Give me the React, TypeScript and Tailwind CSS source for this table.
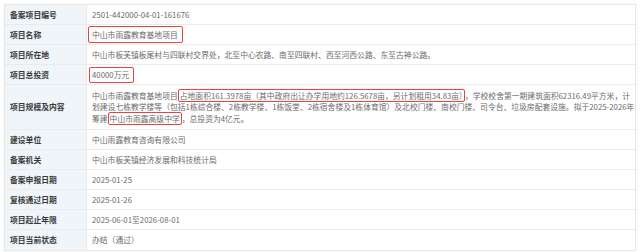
const rows: { label: string; value: React.ReactNode; tall?: boolean }[] = [
  { label: "备案项目编号", value: "2501-442000-04-01-161676" },
  {
    label: "项目名称",
    value: (
      <span className="-ml-[4px] inline-block rounded-[2px] border-[1.5px] border-[#e8433d] px-[3px] pr-[4px] leading-[15px]">
        中山市雨露教育基地项目
      </span>
    ),
  },
  {
    label: "项目所在地",
    value: "中山市板芙镇板尾村与四联村交界处，北至中心农路、南至四联村、西至河西公路、东至古神公路。",
  },
  {
    label: "项目总投资",
    value: (
      <span className="-ml-[3px] inline-block rounded-[2px] border-[1.5px] border-[#e8433d] px-[2px] pr-[4px] leading-[14px]">
        40000万元
      </span>
    ),
  },
  {
    label: "项目规模及内容",
    tall: true,
    value: (
      <div className="leading-[11.5px]">
        <div className="whitespace-nowrap">
          中山市雨露教育基地项目
          <span className="rounded-[2px] border-[1.5px] border-[#e8433d] px-[1px]">
            占地面积161.3978亩（其中政府出让办学用地约126.5678亩，另计划租用34.83亩）
          </span>
          ，学校校舍第一期建筑面积62316.49平方米，计
        </div>
        <div className="whitespace-nowrap">
          划建设七栋教学楼等（包括1栋综合楼、2栋教学楼、1栋饭堂、2栋宿舍楼及1栋体育馆）及北校门楼、南校门楼、司令台、垃圾房配套设施。拟于2025-2026年
        </div>
        <div className="whitespace-nowrap">
          筹建
          <span className="rounded-[2px] border-[1.5px] border-[#e8433d] px-[1px]">中山市雨露高级中学</span>
          ，总投资为4亿元。
        </div>
      </div>
    ),
  },
  { label: "建设单位", value: "中山雨露教育咨询有限公司" },
  { label: "备案机关", value: "中山市板芙镇经济发展和科技统计局" },
  { label: "备案申报日期", value: "2025-01-25" },
  { label: "复核通过日期", value: "2025-01-26" },
  { label: "项目起止年限", value: "2025-06-01至2026-08-01" },
  { label: "项目当前状态", value: "办结（通过）" },
];

export default function App() {
  return (
    <div
      className="h-[252px] w-[640px] overflow-hidden bg-white pl-[4px] pt-[4px]"
      style={{ fontFamily: '"Noto Sans CJK SC", "Noto Sans", sans-serif' }}
    >
      <div className="w-[632px] border border-[#e8e8e8] shadow-[0_0_2px_rgba(0,0,0,0.06)]">
        {rows.map((row) => (
          <div
            key={row.label}
            className={`flex border-b border-[#eaeaea] last:border-b-0 ${row.tall ? "h-[45px]" : "h-[20px]"}`}
          >
            <div className="flex w-[81px] shrink-0 items-center bg-[#eff5f9] pl-[5px] text-[7.8px] font-bold text-[#3a3a3a]">
              {row.label}
            </div>
            <div className="flex min-w-0 flex-1 items-center overflow-hidden border-l border-[#eaeaea] pl-[5px] text-[7.8px] text-[#6b6b6b]">
              {row.value}
            </div>
          </div>
        ))}
      </div>
    </div>
  );
}
